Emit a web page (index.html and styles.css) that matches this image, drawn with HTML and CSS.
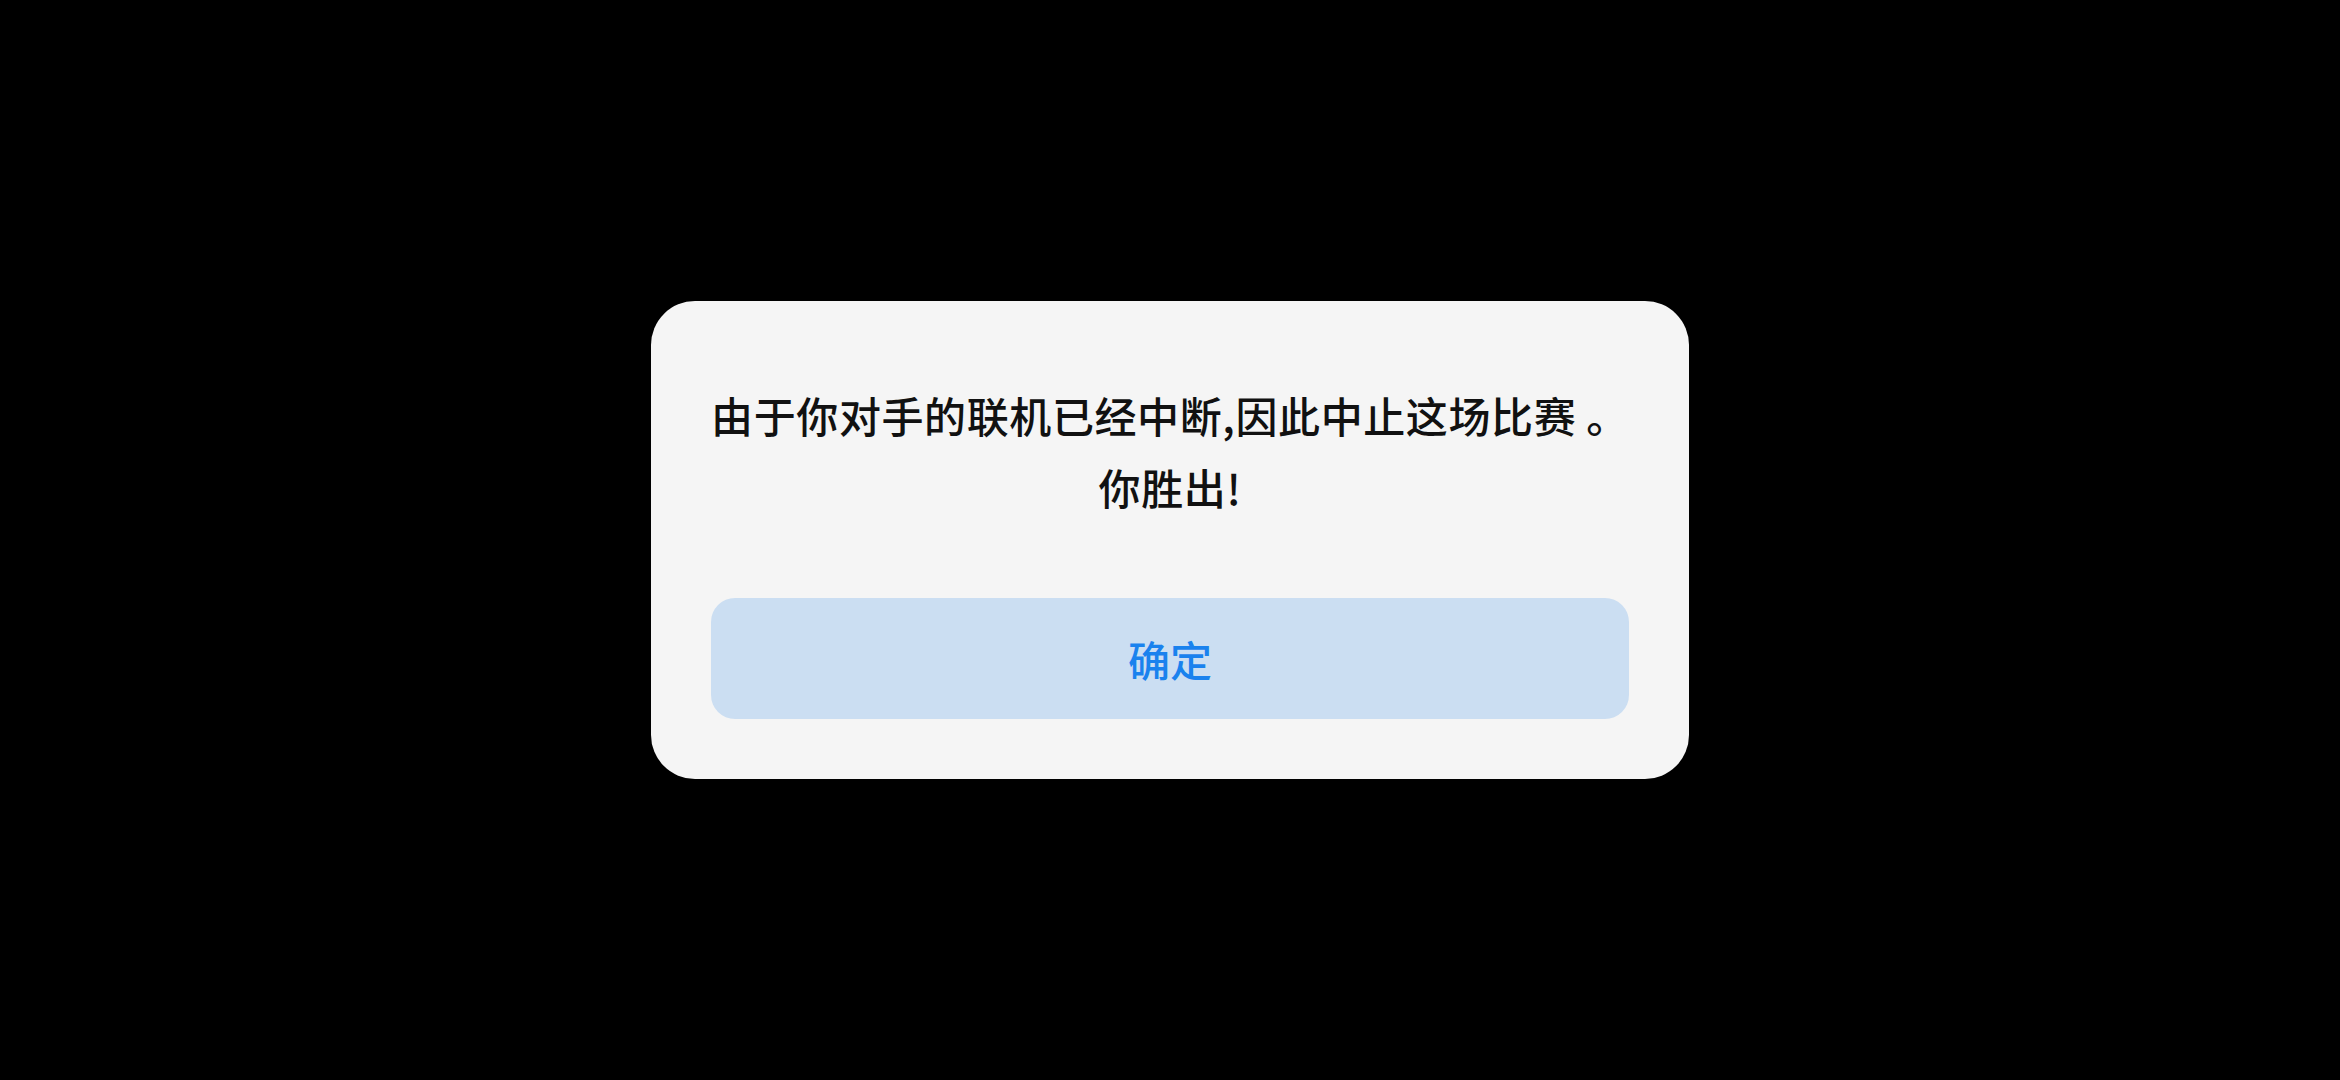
FILE: index.html
```html
<!DOCTYPE html>
<html lang="zh-CN">
<head>
    <meta charset="UTF-8">
    <meta name="viewport" content="width=device-width, initial-scale=1.0">
    <title>对局结束</title>
    <link rel="stylesheet" href="styles.css">
</head>
<body>
    <div class="dialog">
        <p class="message">
            <span class="line">由于你对手的联机已经中断,因此中止这场比赛 。</span>
            <span class="line">你胜出!</span>
        </p>
        <button class="btn-confirm">确定</button>
    </div>
</body>
</html>
```

FILE: styles.css
```css
:root {
    --color-overlay: #000000;
    --color-dialog: #f5f5f5;
    --color-text: #111111;
    --color-button: #cbdef2;
    --color-button-text: #1a82ee;
}

* {
    margin: 0;
    padding: 0;
    box-sizing: border-box;
}

html, body {
    height: 100%;
}

body {
    font-family: "Noto Sans CJK SC", "Noto Sans", sans-serif;
    background-color: var(--color-overlay);
    display: flex;
    align-items: center;
    justify-content: center;
}

.dialog {
    width: 1038px;
    background-color: var(--color-dialog);
    border-radius: 44px;
    padding: 78px 40px 60px;
    display: flex;
    flex-direction: column;
    gap: 75px;
}

.message {
    display: flex;
    flex-direction: column;
    align-items: center;
    color: var(--color-text);
    font-size: 42px;
    font-weight: 500;
    letter-spacing: 0.6px;
    line-height: 72px;
    text-align: center;
    white-space: nowrap;
}

.btn-confirm {
    height: 121px;
    margin: 0 20px;
    border: none;
    border-radius: 24px;
    background-color: var(--color-button);
    color: var(--color-button-text);
    font-family: inherit;
    font-size: 42px;
    font-weight: 500;
    cursor: pointer;
}
```
